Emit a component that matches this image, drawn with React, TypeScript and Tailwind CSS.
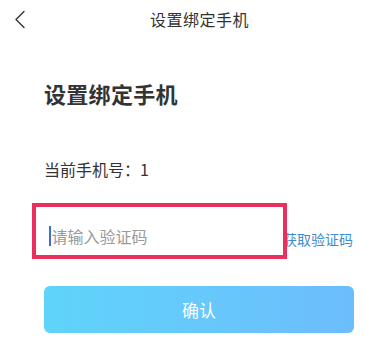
import React from "react";

export default function App() {
  return (
    <div
      className="relative w-[389px] h-[364px] bg-white overflow-hidden"
      style={{ fontFamily: '"Noto Sans CJK SC", "Noto Sans", sans-serif' }}
    >
      {/* Top bar */}
      <div className="relative flex items-center justify-center h-[38px]">
        <svg
          className="absolute left-[14px] top-[10px]"
          width="12"
          height="19"
          viewBox="0 0 12 19"
          fill="none"
        >
          <path d="M10 1.5 L2 9.5 L10 17.5" stroke="#333" strokeWidth="1.4" strokeLinecap="round" strokeLinejoin="round" />
        </svg>
        <span className="text-[16px] text-[#333] tracking-[0.5px] ml-[10px]">设置绑定手机</span>
      </div>

      <div className="px-[44px]">
        <h1 className="mt-[40px] text-[22px] font-bold text-[#333] tracking-[0.3px] leading-[30px]">设置绑定手机</h1>

        <p className="mt-[50px] text-[16px] text-[#333] leading-[22px]">
          当前手机号：1
        </p>

        <div className="mt-[36px] flex items-center h-[40px]">
          <div className="flex items-center flex-1 pl-[5px]">
            <span className="w-[1.5px] h-[20px] bg-[#3b6fd8] mr-[1px]" />
            <span className="text-[16px] text-[#9a9a9a]">请输入验证码</span>
          </div>
          <span className="text-[14px] text-[#3d8dd0] mr-[-8px] mt-[6px]">获取验证码</span>
        </div>

        <button className="mt-[30px] w-[310px] h-[47px] rounded-[6px] bg-gradient-to-r from-[#5fd4fa] to-[#6cbdfc] text-white text-[17px] flex items-center justify-center">
          确认
        </button>
      </div>

      {/* red annotation box */}
      <div className="absolute left-[32px] top-[203px] w-[255px] h-[56px] border-[4px] border-[#ea2f5c]" />
    </div>
  );
}
